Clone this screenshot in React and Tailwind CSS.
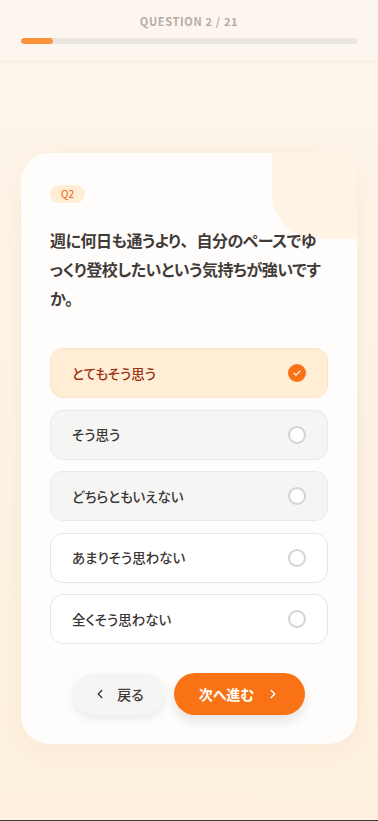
import React from "react";

const options = [
  { label: "とてもそう思う", state: "selected" },
  { label: "そう思う", state: "muted" },
  { label: "どちらともいえない", state: "muted" },
  { label: "あまりそう思わない", state: "plain" },
  { label: "全くそう思わない", state: "plain" },
];

function Check() {
  return (
    <svg width="10" height="10" viewBox="0 0 24 24" fill="none" stroke="white" strokeWidth="3" strokeLinecap="round" strokeLinejoin="round">
      <path d="M5 12.5l4.5 4.5L19 7.5" />
    </svg>
  );
}

function Chevron({ dir }) {
  return (
    <svg width="14" height="14" viewBox="0 0 24 24" fill="none" stroke="currentColor" strokeWidth="2.5" strokeLinecap="round" strokeLinejoin="round">
      {dir === "left" ? <path d="M15 6l-6 6 6 6" /> : <path d="M9 6l6 6-6 6" />}
    </svg>
  );
}

export default function App() {
  return (
    <div
      className="w-[378px] h-[821px] flex flex-col bg-[#3a3a3a] [font-feature-settings:'palt']"
      style={{ fontFamily: "'Noto Sans CJK JP', 'Noto Sans', sans-serif" }}
    >
      <div className="h-[820px] flex flex-col bg-gradient-to-b from-[#fdf5ec] to-[#fdf0df]">
        <header className="h-[62px] flex flex-col items-center pt-[13px] border-b border-dotted border-[#fbe6cc] bg-[#fdf6ee]">
          <div className="text-[11px] font-bold tracking-[0.06em] text-[#b2aca7] leading-[16px]">QUESTION 2 / 21</div>
          <div className="mt-[9px] w-[336px] h-[6px] rounded-full bg-[#e9e6e2] overflow-hidden">
            <div className="h-full w-[32px] rounded-full bg-[#fb923c]" />
          </div>
        </header>

        <div className="flex-1 flex flex-col items-center pt-[91px]">
          <div className="relative w-[336px] rounded-[28px] bg-[#fffdfb] shadow-[0_4px_24px_rgba(234,170,110,0.12)] overflow-hidden px-[29px] pt-[32px] pb-[29px]">
            <div className="absolute top-0 right-0 w-[85px] h-[86px] bg-[#fff3e4] rounded-bl-[46px]" />
            <div className="relative">
              <div className="w-fit flex items-center justify-center h-[18px] px-[11px] rounded-full bg-[#ffedd5] text-[10px] text-[#ea580c] leading-none">Q2</div>
              <h1 className="mt-[23px] text-[16px] tracking-[-0.03em] font-bold leading-[29px] text-[#3f3b38]">
                週に何日も通うより<span className="[font-feature-settings:normal] tracking-normal">、</span>自分のペースでゆっくり登校したいという気持ちが強いですか。
              </h1>
              <div className="mt-[35px] flex flex-col gap-[11.5px]">
                {options.map((o) => (
                  <div
                    key={o.label}
                    className={
                      "h-[50px] rounded-[13px] border flex items-center justify-between pl-[21px] pr-[21px] " +
                      (o.state === "selected"
                        ? "bg-[#ffedd5] border-[#fde3c4]"
                        : o.state === "muted"
                        ? "bg-[#f5f5f4] border-[#ebe9e7]"
                        : "bg-white border-[#e7e5e4]")
                    }
                  >
                    <span
                      className={
                        "text-[13.5px] font-medium " +
                        (o.state === "selected" ? "text-[#9a3412]" : "text-[#3a3633]")
                      }
                    >
                      {o.label}
                    </span>
                    {o.state === "selected" ? (
                      <span className="w-[18px] h-[18px] rounded-full bg-[#f97316] flex items-center justify-center">
                        <Check />
                      </span>
                    ) : (
                      <span className="w-[18px] h-[18px] rounded-full border-2 border-[#d6d3d1] bg-white" />
                    )}
                  </div>
                ))}
              </div>
              <div className="mt-[29px] flex justify-center gap-[10px]">
                <button className="w-[91px] h-[42px] rounded-full bg-[#f5f5f4] shadow-[0_4px_8px_rgba(0,0,0,0.08)] flex items-center justify-center gap-[10px] text-[#3f3b38] text-[14px] font-medium">
                  <Chevron dir="left" />
                  <span>戻る</span>
                </button>
                <button className="w-[131px] h-[42px] rounded-full bg-[#f97316] shadow-[0_6px_12px_rgba(0,0,0,0.1)] flex items-center justify-center gap-[12px] text-white text-[14px] font-bold">
                  <span>次へ進む</span>
                  <Chevron dir="right" />
                </button>
              </div>
            </div>
          </div>
        </div>
      </div>
    </div>
  );
}
